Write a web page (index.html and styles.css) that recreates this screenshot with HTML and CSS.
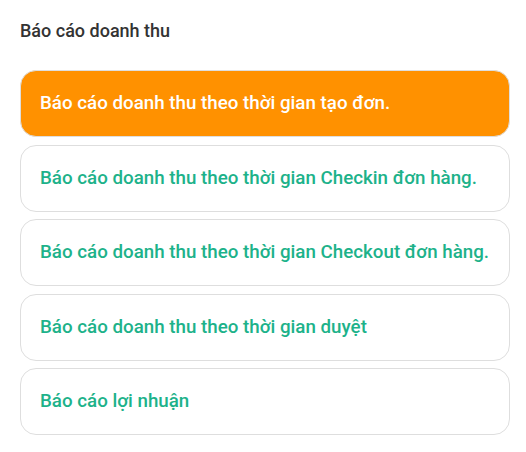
FILE: index.html
```html
<!DOCTYPE html>
<html>
<head>
    <title>Báo cáo doanh thu</title>
    <meta charset="UTF-8">
    <meta name="viewport" content="width=device-width, initial-scale=1.0">
    <link rel="stylesheet" href="styles.css">
</head>
<body>
    <div class="report-page">
        <h3 class="report-title">Báo cáo doanh thu</h3>
        <div class="report-list">
            <a class="report-item active" href="#">Báo cáo doanh thu theo thời gian tạo đơn.</a>
            <a class="report-item" href="#">Báo cáo doanh thu theo thời gian Checkin đơn hàng.</a>
            <a class="report-item" href="#">Báo cáo doanh thu theo thời gian Checkout đơn hàng.</a>
            <a class="report-item" href="#">Báo cáo doanh thu theo thời gian duyệt</a>
            <a class="report-item" href="#">Báo cáo lợi nhuận</a>
        </div>
    </div>
</body>
</html>
```

FILE: styles.css
```css
:root {
    --primary-color: #ff9100;
    --text-green: #1db28a;
    --border-color: #dedede;
}

body {
    margin: 0;
    font-family: Roboto, "Noto Sans", Arial, sans-serif;
    background: #fff;
}

.report-page {
    padding: 20px 16px 0 20px;
}

.report-title {
    margin: 0 0 28px;
    font-size: 18px;
    font-weight: 500;
    line-height: 22px;
    color: #333;
}

.report-list {
    display: flex;
    flex-direction: column;
    gap: 7.5px;
}

.report-item {
    display: block;
    padding: 22px 19px;
    border: 1px solid var(--border-color);
    border-radius: 16px;
    font-size: 18.75px;
    font-weight: 500;
    line-height: 21px;
    color: var(--text-green);
    text-decoration: none;
}

.report-item.active {
    background: var(--primary-color);
    color: #fff;
}
```
